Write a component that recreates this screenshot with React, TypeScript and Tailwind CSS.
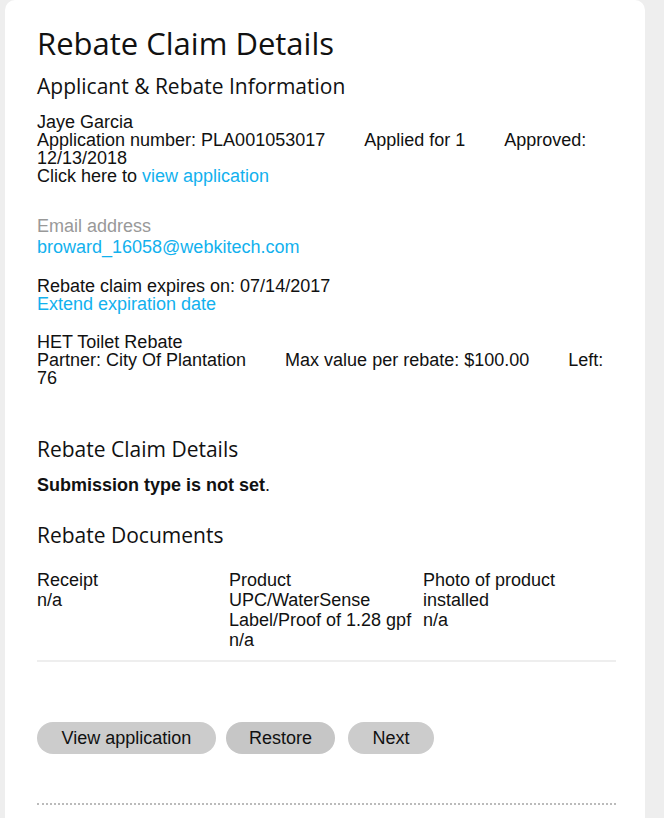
import React from "react";

const heading = "font-['Open_Sans',sans-serif] text-[#111]";

function Row({ items }: { items: string[] }) {
  return (
    <p>
      {items.map((t, i) => (
        <span key={i} className={i < items.length - 1 ? "mr-[39px]" : ""}>
          {t}
        </span>
      ))}
    </p>
  );
}

export default function App() {
  return (
    <div className="min-h-screen bg-[#eeeeee] pl-[5px] pr-[19px] font-['Liberation_Sans',Arial,sans-serif] text-[18px] leading-[18px] text-[#111]">
      <div className="min-h-[818px] rounded-t-[10px] bg-white pl-[32px] pr-[29px] pt-[24px] pb-[12px]">
        <h1 className={`${heading} text-[31px] leading-[38px]`}>
          Rebate Claim Details
        </h1>
        <h2 className={`${heading} mt-[10px] text-[21px] leading-[28px]`}>
          Applicant &amp; Rebate Information
        </h2>

        <div className="mt-[13px]">
          <p>Jaye Garcia</p>
          <Row
            items={[
              "Application number: PLA001053017",
              "Applied for 1",
              "Approved: 12/13/2018",
            ]}
          />
          <p>
            Click here to{" "}
            <a href="#" className="text-[#12b1ee]">
              view application
            </a>
          </p>
        </div>

        <div className="mt-[32px]">
          <p className="text-[#999]">Email address</p>
          <a href="#" className="mt-[3px] block text-[#12b1ee]">
            broward_16058@webkitech.com
          </a>
        </div>

        <div className="mt-[21px]">
          <p>Rebate claim expires on: 07/14/2017</p>
          <a href="#" className="block text-[#12b1ee]">
            Extend expiration date
          </a>
        </div>

        <div className="mt-[20px]">
          <p>HET Toilet Rebate</p>
          <Row
            items={[
              "Partner: City Of Plantation",
              "Max value per rebate: $100.00",
              "Left: 76",
            ]}
          />
        </div>

        <h2 className={`${heading} mt-[48px] text-[21px] leading-[28px]`}>
          Rebate Claim Details
        </h2>
        <p className="mt-[13px]">
          <b>Submission type is not set</b>.
        </p>

        <h2 className={`${heading} mt-[27px] text-[21px] leading-[28px]`}>
          Rebate Documents
        </h2>

        <div className="mt-[21px] grid grid-cols-[192px_194px_1fr] border-b-2 border-[#eeeeee] pb-[10px] leading-[20px]">
          <div className="pr-[4px]">
            <p>Receipt</p>
            <p>n/a</p>
          </div>
          <div className="pr-[4px]">
            <p>Product UPC/WaterSense Label/Proof of 1.28 gpf</p>
            <p>n/a</p>
          </div>
          <div className="pr-[4px]">
            <p>Photo of product installed</p>
            <p>n/a</p>
          </div>
        </div>

        <div className="mt-[60px] flex items-center">
          <button className="h-[32px] w-[179px] rounded-full bg-[#cccccc] text-[#111]">
            View application
          </button>
          <button className="ml-[10px] h-[32px] w-[109px] rounded-full bg-[#c6c6c6] text-[#111]">
            Restore
          </button>
          <button className="ml-[13px] h-[32px] w-[86px] rounded-full bg-[#cccccc] text-[#111]">
            Next
          </button>
        </div>

        <div className="mt-[49px] border-b-2 border-dotted border-[#bbbbbb]" />
      </div>
    </div>
  );
}
